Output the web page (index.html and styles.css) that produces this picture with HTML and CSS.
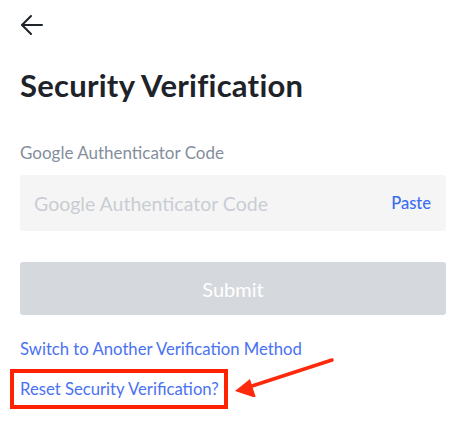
FILE: index.html
```html
<!DOCTYPE html>
<html>
<head>
<meta charset="utf-8">
<link rel="stylesheet" href="styles.css">
</head>
<body>
<div class="page">
  <div class="topbar">
    <svg class="back" width="24" height="22" viewBox="0 0 24 22" fill="none" stroke="#1e2329" stroke-width="2" stroke-linecap="round" stroke-linejoin="round">
      <path d="M22 11H2.5"/>
      <path d="M11 2L2 11L11 20"/>
    </svg>
  </div>
  <h1 class="title">Security Verification</h1>
  <div class="label">Google Authenticator Code</div>
  <div class="field">
    <span class="placeholder">Google Authenticator Code</span>
    <span class="paste">Paste</span>
  </div>
  <div class="submit">Submit</div>
  <div class="link switch">Switch to Another Verification Method</div>
  <div class="reset-wrap">
    <div class="link reset">Reset Security Verification?</div>
  </div>
  <svg class="annot" width="110" height="40" viewBox="0 0 110 40">
    <path d="M102 3L22 29" stroke="#ff2a0d" stroke-width="3.5" stroke-linecap="round"/>
    <path d="M5 34L20 22L26 41Z" fill="#ff2a0d"/>
  </svg>
</div>
</body>
</html>
```
FILE: styles.css
```css
html, body {
  margin: 0;
  padding: 0;
  background: #ffffff;
}
body {
  font-family: Lato, "Open Sans", sans-serif;
}
.page {
  position: relative;
  width: 465px;
  height: 439px;
  box-sizing: border-box;
  padding: 0 19px 0 20px;
}
.topbar {
  height: 50px;
  display: flex;
  align-items: flex-start;
  padding-top: 14px;
  box-sizing: border-box;
}
.back {
  display: block;
}
.title {
  margin: 0;
  height: 70px;
  font-size: 31px;
  font-weight: 700;
  color: #1e2329;
  line-height: 70px;
  letter-spacing: 0.25px;
}
.label {
  margin-top: 23px;
  height: 32px;
  font-size: 17px;
  line-height: 19px;
  color: #848e9c;
}
.field {
  height: 56px;
  background: #f5f5f5;
  border-radius: 3px;
  display: flex;
  align-items: center;
  justify-content: space-between;
  padding: 0 15px 0 14px;
}
.placeholder {
  font-size: 19.5px;
  color: #c9cdd3;
}
.paste {
  font-size: 16.5px;
  color: #3a6df0;
  font-weight: 500;
}
.submit {
  margin-top: 31px;
  height: 53px;
  background: #d5d9dd;
  border-radius: 3px;
  display: flex;
  align-items: center;
  justify-content: center;
  font-size: 20px;
  color: #ffffff;
}
.link {
  font-size: 16.7px;
  color: #4a72f2;
}
.switch {
  margin-top: 23px;
  height: 22px;
  line-height: 22px;
}
.reset-wrap {
  margin-top: 9px;
  margin-left: -10px;
  width: 218px;
  height: 40px;
  box-sizing: border-box;
  border: 4px solid #ff2200;
  display: flex;
  align-items: center;
  padding-left: 6px;
}
.annot {
  position: absolute;
  left: 230px;
  top: 357px;
}
```
